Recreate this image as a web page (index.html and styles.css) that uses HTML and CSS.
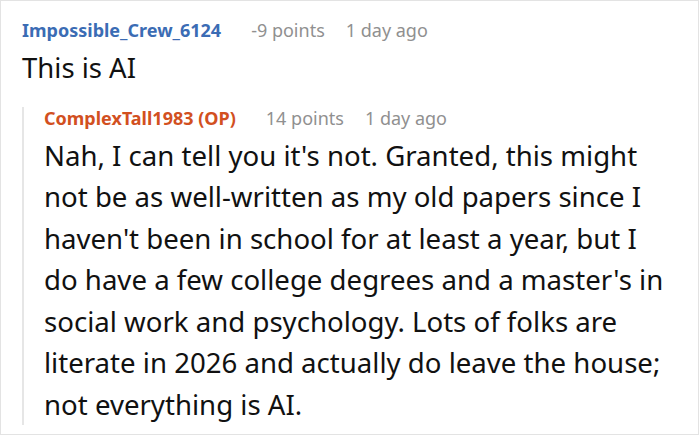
FILE: index.html
```html
<!DOCTYPE html>
<html>
<head>
<meta charset="utf-8">
<link rel="stylesheet" href="styles.css">
</head>
<body>
<div class="frame">
  <div class="comment">
    <div class="meta">
      <span class="author blue">Impossible_Crew_6124</span>
      <span class="info">-9 points</span>
      <span class="info">1 day ago</span>
    </div>
    <div class="title">This is AI</div>
    <div class="reply">
      <div class="meta reply-meta">
        <span class="author orange">ComplexTall1983 (OP)</span>
        <span class="info">14 points</span>
        <span class="info">1 day ago</span>
      </div>
      <div class="body">Nah, I can tell you it's not. Granted, this might not be as well-written as my old papers since I haven't been in school for at least a year, but I do have a few college degrees and a master's in social work and psychology. Lots of folks are literate in 2026 and actually do leave the house; not everything is AI.</div>
    </div>
  </div>
</div>
</body>
</html>
```

FILE: styles.css
```css
html, body {
  margin: 0;
  padding: 0;
  background: #ffffff;
}
.frame {
  width: 699px;
  height: 435px;
  box-sizing: border-box;
  border: 1px solid #e3e3e3;
  padding: 16px 0 0 21px;
  font-family: "Noto Sans", sans-serif;
  overflow: hidden;
}
.meta {
  display: flex;
  align-items: baseline;
  gap: 21px;
  font-size: 18px;
  line-height: 26px;
}
.author {
  font-weight: 700;
  margin-right: 9px;
}
.blue { color: #3b6cb4; }
.orange { color: #d2501f; }
.info { color: #909090; }
.title {
  margin-top: 4px;
  font-size: 27.5px;
  line-height: 41.5px;
  color: #111111;
}
.reply {
  margin-top: 18px;
  border-left: 2px solid #e6e6e6;
  padding-left: 20px;
}
.reply-meta {
  line-height: 22px;
}
.body {
  margin-top: 6px;
  margin-bottom: -8px;
  width: 628px;
  font-size: 27.6px;
  line-height: 41.5px;
  color: #111111;
}
```
